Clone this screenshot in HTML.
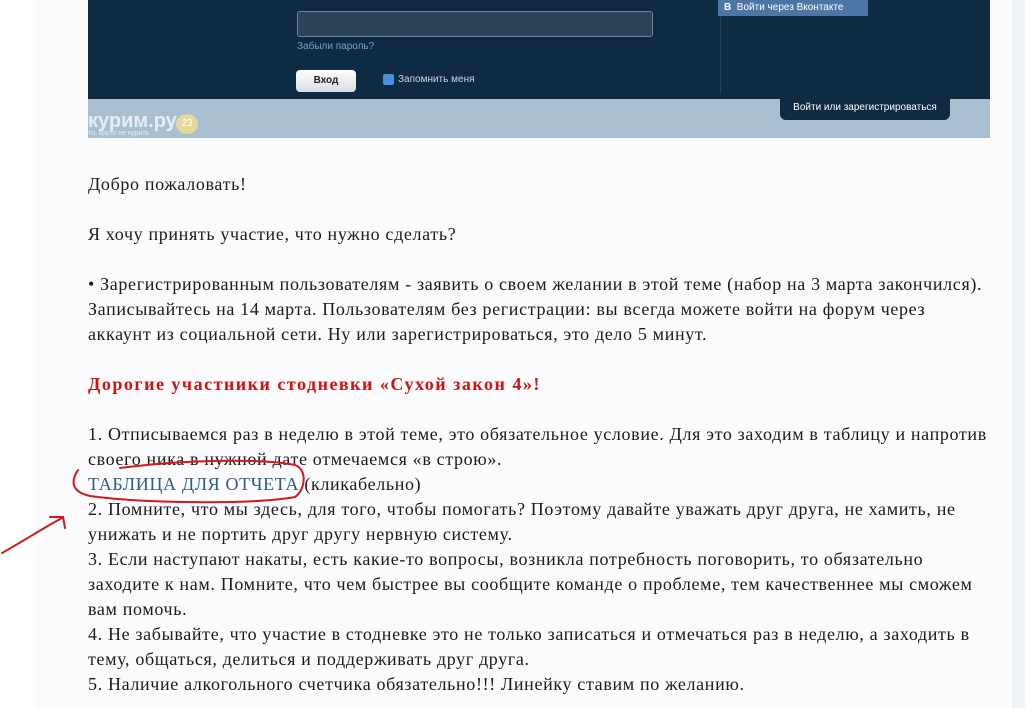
<!DOCTYPE html>
<html><head><meta charset="utf-8"><style>
body{margin:0;width:1025px;height:708px;overflow:hidden;background:#fff;position:relative;font-family:"Liberation Serif","DejaVu Serif",serif;}
.panel{position:absolute;left:35px;top:0;width:977px;height:708px;background:#fbfbfe;}
.rside{position:absolute;left:1012px;top:0;width:13px;height:708px;background:#eef3f8;}
.img{position:absolute;left:88px;top:0;width:902px;height:138px;background:#a8bfd1;overflow:hidden;font-family:"Liberation Sans",sans-serif;}
.dark{position:absolute;left:0;top:0;width:902px;height:99px;background:#0f2a43;}
.l{position:absolute;left:88px;font-size:18px;letter-spacing:0.65px;white-space:nowrap;color:#1a1a1a;line-height:20px;}
.red{color:#d60f0f;font-weight:bold;letter-spacing:1.5px}
a{color:#2e5a86;text-decoration:none}
</style></head><body>
<div class="panel"></div><div class="rside"></div>
<div class="img">
 <div class="dark"></div>
 <div style="position:absolute;left:209px;top:11px;width:354px;height:24px;background:#2c4459;border:1px solid #6f8598;border-radius:3px"></div>
 <div style="position:absolute;left:209px;top:41px;font-size:10px;color:#6ea4d8">Забыли пароль?</div>
 <div style="position:absolute;left:208px;top:70px;width:60px;height:22px;background:linear-gradient(#fff,#d8dde3);border-radius:4px;font-size:10px;font-weight:bold;text-align:center;line-height:22px;color:#222">Вход</div>
 <div style="position:absolute;left:295px;top:74px;width:11px;height:11px;background:#4a90d9;border-radius:2px"></div>
 <div style="position:absolute;left:310px;top:74px;font-size:10px;color:#cfd8e0">Запомнить меня</div>
 <div style="position:absolute;left:632px;top:0;width:1px;height:94px;background:#263f57"></div>
 <div style="position:absolute;left:630px;top:0;width:144px;height:16px;background:#4d76a5;font-size:10px;color:#fff;line-height:16px;padding-left:6px"><b>В</b>&nbsp; Войти через Вконтакте</div>
 <div style="position:absolute;left:0;top:110px;font-size:20px;font-weight:bold;color:#e5eef5">курим.ру</div>
 <div style="position:absolute;left:88px;top:114px;width:22px;height:20px;background:#e6d79a;border-radius:50%;font-size:10px;color:#fff;text-align:center;line-height:20px">23</div>
 <div style="position:absolute;left:0;top:130px;font-size:7px;color:#e5eef5">то, круто не курить</div>
 <div style="position:absolute;left:692px;top:96px;width:170px;height:24px;background:#0f2a43;border-radius:0 0 6px 6px;font-size:10px;color:#fff;text-align:center;line-height:24px">Войти или зарегистрироваться</div>
</div>
<div class="l" style="top:174px">Добро пожаловать!</div>
<div class="l" style="top:224px">Я хочу принять участие, что нужно сделать?</div>
<div class="l" style="top:274px">• Зарегистрированным пользователям - заявить о своем желании в этой теме (набор на 3 марта закончился).</div>
<div class="l" style="top:299px">Записывайтесь на 14 марта. Пользователям без регистрации: вы всегда можете войти на форум через</div>
<div class="l" style="top:324px">аккаунт из социальной сети. Ну или зарегистрироваться, это дело 5 минут.</div>
<div class="l red" style="top:374px">Дорогие участники стодневки «Сухой закон 4»!</div>
<div class="l" style="top:424px">1. Отписываемся раз в неделю в этой теме, это обязательное условие. Для это заходим в таблицу и напротив</div>
<div class="l" style="top:449px">своего ника в нужной дате отмечаемся «в строю».</div>
<div class="l" style="top:474px"><a>ТАБЛИЦА ДЛЯ ОТЧЕТА</a> (кликабельно)</div>
<div class="l" style="top:499px">2. Помните, что мы здесь, для того, чтобы помогать? Поэтому давайте уважать друг друга, не хамить, не</div>
<div class="l" style="top:524px">унижать и не портить друг другу нервную систему.</div>
<div class="l" style="top:549px">3. Если наступают накаты, есть какие-то вопросы, возникла потребность поговорить, то обязательно</div>
<div class="l" style="top:574px">заходите к нам. Помните, что чем быстрее вы сообщите команде о проблеме, тем качественнее мы сможем</div>
<div class="l" style="top:599px">вам помочь.</div>
<div class="l" style="top:624px">4. Не забывайте, что участие в стодневке это не только записаться и отмечаться раз в неделю, а заходить в</div>
<div class="l" style="top:649px">тему, общаться, делиться и поддерживать друг друга.</div>
<div class="l" style="top:674px">5. Наличие алкогольного счетчика обязательно!!! Линейку ставим по желанию.</div>
<svg style="position:absolute;left:0;top:0" width="1025" height="708" fill="none" stroke="#d41818" stroke-width="2" stroke-linecap="round">
<path d="M120 468 C180 460 260 458 295 465 C308 470 305 490 295 497 C250 505 140 503 90 496 C72 492 70 482 78 470"/>
<path d="M2 553 C25 540 45 527 62 518 M50 517 L63 517 L65 528"/>
</svg>
</body></html>
